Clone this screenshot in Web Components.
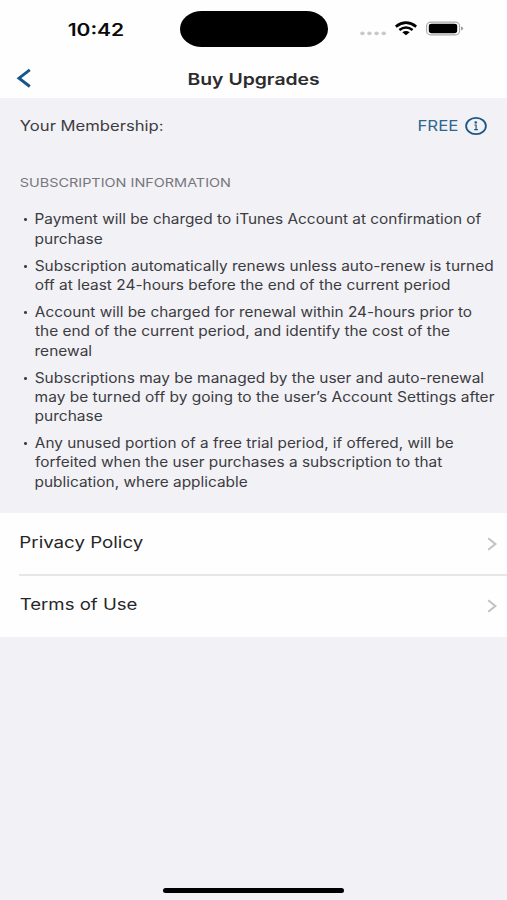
<!DOCTYPE html>
<html lang="en">
<head>
<meta charset="utf-8">
<title>Buy Upgrades</title>
<style>
html,body{margin:0;height:100%}
body{font-family:Inter,"Liberation Sans",sans-serif;background:#f2f1f6;color:#3b3b40;overflow:hidden}
</style>
</head>
<body>
<upgrade-screen></upgrade-screen>
<script>
// One line of text whose glyphs are widened to span exactly `w` pixels.
class WideText extends HTMLElement {
  connectedCallback() {
    const root = this.attachShadow({mode: 'open'});
    root.innerHTML = `<style>:host{display:block;white-space:nowrap;flex:none}
      span{display:inline-block;transform-origin:0 50%}</style><span><slot></slot></span>`;
    const w = parseFloat(this.getAttribute('w'));
    this.style.width = w + 'px';
    const cs = getComputedStyle(this);
    const ctx = document.createElement('canvas').getContext('2d');
    // Side bearings come back rounded, so they are read at ten times the size.
    ctx.font = `${cs.fontWeight} ${parseFloat(cs.fontSize) * 10}px ${cs.fontFamily}`;
    const m = ctx.measureText(this.textContent);
    const left = -m.actualBoundingBoxLeft / 10 * 0.4;
    const rightGap = (m.width - m.actualBoundingBoxRight) / 10;
    const span = root.querySelector('span');
    const s = w / (span.getBoundingClientRect().width - left - rightGap);
    span.style.transform = `translateX(${(-left * s).toFixed(2)}px) scaleX(${s.toFixed(4)})`;
  }
}

class StatusBar extends HTMLElement {
  connectedCallback() {
    this.attachShadow({mode: 'open'}).innerHTML = `<style>
      :host{display:grid;grid-template-columns:180px 148px 1fr;height:58px;box-sizing:border-box;padding-top:11px;align-items:start;color:#0a0a0a}
      .time{font-size:17px;font-weight:600;line-height:20px;padding:9px 0 0 68px}
      .island{height:36px;border-radius:22px/18px;background:#000}
      svg{display:block;margin-left:30px}
    </style>
    <div class="time"><wide-text w="55">10:42</wide-text></div>
    <div class="island"></div>
    <svg width="110" height="36" viewBox="358 11 110 36">
      <g fill="#c9c9c9"><ellipse cx="362.4" cy="33.3" rx="2.2" ry="1.9"/><ellipse cx="369.4" cy="33.3" rx="2.2" ry="1.9"/><ellipse cx="376.6" cy="33.3" rx="2.2" ry="1.9"/><ellipse cx="383.8" cy="33.3" rx="2.2" ry="1.9"/></g>
      <g fill="none" stroke="#000" stroke-width="2.6">
        <path d="M395.8 26.6Q406 18.8 416.2 26.6"/>
        <path d="M399.4 30Q406 25 412.6 30"/>
      </g>
      <path d="M402.3 32.3Q406 29.7 409.7 32.3L406 35.2Z"/>
      <rect x="426.6" y="22.1" width="33" height="12.8" rx="4.6" ry="4" fill="none" stroke="#a9a9a9" stroke-width="1.1"/>
      <rect x="428.8" y="23.8" width="28.4" height="9.4" rx="2.8" ry="2.4"/>
      <path d="M461 26.6Q463.2 27.2 463.2 28.5T461 30.4Z" fill="#a0a0a0"/>
    </svg>`;
  }
}

class NavBar extends HTMLElement {
  connectedCallback() {
    this.attachShadow({mode: 'open'}).innerHTML = `<style>
      :host{display:flex;height:40px;align-items:center;font-size:16px;font-weight:600;line-height:20px;color:#2c2c2e}
      svg{flex:none;width:188px;height:40px}
      wide-text{padding-top:2px}
    </style>
    <svg viewBox="0 58 188 40"><path d="M29.8 69.9L19 78.2L29.8 86.5" fill="none" stroke="#15568a" stroke-width="2.9"/></svg>
    <wide-text w="131">Buy Upgrades</wide-text>`;
  }
}

class MembershipRow extends HTMLElement {
  connectedCallback() {
    this.attachShadow({mode: 'open'}).innerHTML = `<style>
      :host{display:flex;align-items:center;height:56px;box-sizing:border-box;padding:0 20.4px;font-size:14px;line-height:20px}
      .plan{margin-left:auto;display:flex;align-items:center;gap:7px;color:#2f668f}
      svg{display:block}
    </style>
    <wide-text w="142.3">Your Membership:</wide-text>
    <div class="plan"><wide-text w="39.4">FREE</wide-text>
      <svg width="22" height="20" viewBox="0 0 22 20"><ellipse cx="11" cy="10" rx="9.9" ry="8.1" fill="none" stroke="#1d5786" stroke-width="1.8"/>
      <ellipse cx="10.8" cy="6.5" rx="1.4" ry="1.15" fill="#1d5786"/><path d="M9.4 9H11.1V13.5M9.2 13.7H12.9" fill="none" stroke="#1d5786" stroke-width="1.2"/></svg>
    </div>`;
  }
}

class TermsItem extends HTMLElement {
  connectedCallback() {
    this.attachShadow({mode: 'open'}).innerHTML = `<style>
      :host{display:grid;grid-template-columns:11.9px 1fr;font-size:14px;line-height:19.3px}
      i{width:3.4px;height:3px;border-radius:50%;background:#3b3b40;margin-top:9px}
    </style><i></i><div><slot></slot></div>`;
  }
}

class LinkRow extends HTMLElement {
  connectedCallback() {
    this.attachShadow({mode: 'open'}).innerHTML = `<style>
      :host{display:flex;align-items:center;justify-content:space-between;height:60px;padding-right:10px;font-size:16px;line-height:20px;color:#262628}
      svg{display:block;margin-top:1.4px}
      ::slotted(wide-text){margin-top:-3px}
    </style><slot></slot>
    <svg width="10" height="14" viewBox="0 0 10 14"><path d="M1.2 1.3L8.4 7L1.2 12.7" fill="none" stroke="#c2c2c4" stroke-width="2.1"/></svg>`;
  }
}

class UpgradeScreen extends HTMLElement {
  connectedCallback() {
    this.attachShadow({mode: 'open'}).innerHTML = `<style>
      :host{display:flex;flex-direction:column;height:900px;width:507px;background:#f2f1f6}
      header{background:#fefefe}
      h2{margin:0;padding:19px 0 0 20.2px;font-size:12.2px;font-weight:400;line-height:20px;color:#77777b}
      .terms{display:flex;flex-direction:column;gap:7.7px;padding:16.4px 0 0 23.6px;height:320px;box-sizing:border-box}
      .links{background:#fefefe;height:124px;padding-left:20.4px;display:flex;flex-direction:column}
      .rule{height:2px;background:#e7e7e9;margin:.6px 0 0 -1px;flex:none}
      .home{width:181px;height:5px;border-radius:3px;background:#000;margin:auto 0 7.5px 163.4px}
    </style>
    <header><status-bar></status-bar><nav-bar></nav-bar></header>
    <membership-row></membership-row>
    <h2><wide-text w="209.8">SUBSCRIPTION INFORMATION</wide-text></h2>
    <div class="terms">
      <terms-item><wide-text w="446">Payment will be charged to iTunes Account at confirmation of</wide-text><wide-text w="67">purchase</wide-text></terms-item>
      <terms-item><wide-text w="457.5">Subscription automatically renews unless auto-renew is turned</wide-text><wide-text w="414.3">off at least 24-hours before the end of the current period</wide-text></terms-item>
      <terms-item><wide-text w="436.3">Account will be charged for renewal within 24-hours prior to</wide-text><wide-text w="414.3">the end of the current period, and identify the cost of the</wide-text><wide-text w="56">renewal</wide-text></terms-item>
      <terms-item><wide-text w="448">Subscriptions may be managed by the user and auto-renewal</wide-text><wide-text w="459.2">may be turned off by going to the user’s Account Settings after</wide-text><wide-text w="67">purchase</wide-text></terms-item>
      <terms-item><wide-text w="418">Any unused portion of a free trial period, if offered, will be</wide-text><wide-text w="407">forfeited when the user purchases a subscription to that</wide-text><wide-text w="212">publication, where applicable</wide-text></terms-item>
    </div>
    <div class="links">
      <link-row><wide-text w="122.8">Privacy Policy</wide-text></link-row>
      <div class="rule"></div>
      <link-row><wide-text w="116.6">Terms of Use</wide-text></link-row>
    </div>
    <div class="home"></div>`;
  }
}

customElements.define('wide-text', WideText);
customElements.define('status-bar', StatusBar);
customElements.define('nav-bar', NavBar);
customElements.define('membership-row', MembershipRow);
customElements.define('terms-item', TermsItem);
customElements.define('link-row', LinkRow);
customElements.define('upgrade-screen', UpgradeScreen);
</script>
</body>
</html>
